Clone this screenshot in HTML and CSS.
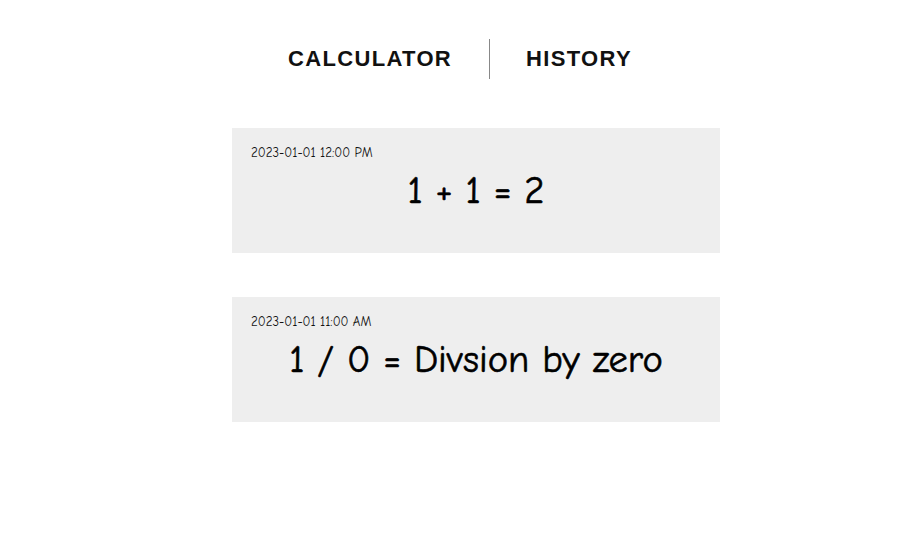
FILE: index.html
```html
<!DOCTYPE html>
<html>
<head>
<meta charset="utf-8">
<link rel="stylesheet" href="styles.css">
</head>
<body>
<nav class="nav">
  <a class="nav-item">CALCULATOR</a>
  <span class="nav-sep"></span>
  <a class="nav-item">HISTORY</a>
</nav>
<main class="history">
  <section class="entry">
    <div class="entry-time">2023-01-01 12:00 PM</div>
    <div class="entry-expr">1 + 1 = 2</div>
  </section>
  <section class="entry">
    <div class="entry-time">2023-01-01 11:00 AM</div>
    <div class="entry-expr">1 / 0 = Divsion by zero</div>
  </section>
</main>
</body>
</html>
```

FILE: styles.css
```css
html, body {
  margin: 0;
  padding: 0;
  background: #ffffff;
}
body {
  width: 903px;
  height: 545px;
  overflow: hidden;
}
.nav {
  display: flex;
  justify-content: center;
  align-items: center;
  padding: 39px 0 0 18px;
  height: 40px;
}
.nav-item {
  font-family: "Liberation Sans", Arial, sans-serif;
  font-weight: bold;
  font-size: 22px;
  letter-spacing: 1.33px;
  color: #111;
  padding: 0 37px 0 36px;
}
.nav-sep {
  width: 1px;
  height: 40px;
  background: #888;
}
.history {
  display: flex;
  flex-direction: column;
  gap: 44px;
  width: 488px;
  margin: 49px 0 0 232px;
}
.entry {
  background: #eeeeee;
  height: 125px;
  box-sizing: border-box;
  padding: 18px 19px 0;
  font-family: "Comic Sans MS", "Comic Neue", cursive;
  color: #000;
}
.entry-time {
  font-size: 13px;
  line-height: 14px;
  color: #111;
}
.entry-expr {
  text-align: center;
  font-size: 38.5px;
  line-height: 42px;
  margin-top: 10px;
  -webkit-text-stroke: 0.6px #000;
}
```
